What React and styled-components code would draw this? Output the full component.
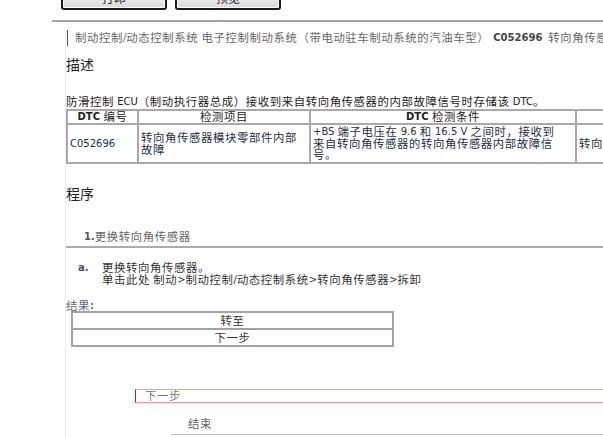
import React from "react";
import styled, { createGlobalStyle } from "styled-components";

const GlobalStyle = createGlobalStyle`
  html, body {
    margin: 0;
    padding: 0;
    background: #fff;
    overflow: hidden;
  }
  body {
    font-family: "DejaVu Sans", "Noto Sans CJK SC", sans-serif;
    font-size: 10px;
    color: #333;
  }
`;

// CJK runs are drawn a little larger than the Latin text, as in the manual.
// line-height 0 keeps them from stretching the line box.
const Han = styled.span`
  font-family: "Noto Sans CJK SC", sans-serif;
  font-size: 11.4px;
  letter-spacing: 0.6px;
  font-weight: 400;
  line-height: 0;
  vertical-align: -1px;
`;

const HAN_RUN = /([\u2E80-\u9FFF\u3000-\u303F\uFF00-\uFFEF]+)/;

function Mixed({ text }) {
  return text.split(HAN_RUN).map((part, i) =>
    i % 2 ? <Han key={i}>{part}</Han> : part
  );
}

const Page = styled.div`
  width: 603px;
  height: 437px;
  overflow: hidden;
`;

const Toolbar = styled.div`
  display: flex;
  gap: 8px;
  margin-top: -14px;
  padding-left: 61px;
`;

const ToolButton = styled.button`
  width: 106px;
  height: 24px;
  box-sizing: border-box;
  border: 2px solid #1a1a1a;
  border-radius: 3px;
  background: linear-gradient(#fbfbfb, #dadada);
  box-shadow: inset 0 0 0 1px #fff;
  font-family: "Noto Sans CJK SC", sans-serif;
  font-size: 12px;
  line-height: 18px;
  color: #222;
  padding: 0;
`;

const TopRule = styled.div`
  margin: 10px 0 0 52px;
  height: 2px;
  background: #a6a6a6;
`;

const Content = styled.div`
  margin-left: 65px;
  border-left: 1px solid #ececec;
  min-height: 420px;
  width: 700px;
`;

const Crumb = styled.div`
  margin: 8px 0 0 1px;
  border-left: 1px solid #555;
  padding-left: 7px;
  height: 16px;
  line-height: 16px;
  color: #666;
  white-space: nowrap;
`;

const Code = styled.b`
  color: #444;
  margin: 0 6px 0 4px;
`;

const Heading = styled.h2`
  margin: ${p => p.$top}px 0 0;
  font-family: "Noto Sans CJK SC", sans-serif;
  font-size: 14px;
  font-weight: 400;
  line-height: 16px;
  color: #222;
`;

const Para = styled.p`
  margin: 23px 0 0;
  line-height: 13px;
  color: #222;
  white-space: nowrap;
`;

const DtcTable = styled.table`
  margin-top: 1px;
  border-collapse: collapse;
  table-layout: fixed;
  width: 655px;
  color: #26303f;
`;

const HeadCell = styled.th`
  width: ${p => p.$w}px;
  border: 2px solid #a9a9a9;
  padding: 0;
  height: 10px;
  line-height: 12px;
  font-weight: 700;
  color: #222;
  text-align: center;
`;

const Cell = styled.td`
  border: 2px solid #a9a9a9;
  padding: 1px ${p => p.$pr || 8}px 1px 2px;
  height: 35px;
  line-height: 11.5px;
  vertical-align: middle;
`;

const StepTitle = styled.div`
  margin-top: 30px;
  padding: 0 0 3px 18px;
  border-bottom: 2px solid #ababab;
  line-height: 12px;
  color: #666;
`;

const StepNo = styled.b`
  color: #555;
`;

const SubStep = styled.div`
  display: grid;
  grid-template-columns: 24px 1fr;
  margin-top: 14px;
  padding-left: 12px;
  line-height: 12px;
  color: #333;
`;

const SubLabel = styled.b`
  color: #3c5272;
`;

const ResultLabel = styled.div`
  margin-top: 14px;
  line-height: 12px;
  color: #5a6b7c;
  font-weight: 700;
`;

const ResultTable = styled.table`
  margin: -1px 0 0 5px;
  width: 323px;
  border-collapse: collapse;
`;

const ResultCell = styled.td`
  border: 2px solid #a3a3a3;
  height: 15px;
  padding: 0;
  line-height: 15px;
  text-align: center;
  color: #333;
`;

const NextBox = styled.div`
  margin: 42px 0 0 69px;
  border: 1px solid #f59a9a;
  border-left-color: #d01818;
  padding-left: 9px;
  line-height: 12px;
  color: #777;
`;

const EndRow = styled.div`
  margin: 15px 0 0 105px;
  padding: 0 0 4px 17px;
  border-bottom: 1px solid #bdbdbd;
  line-height: 12px;
  color: #666;
`;

export default function App() {
  return (
    <Page>
      <GlobalStyle />
      <Toolbar>
        <ToolButton>打印</ToolButton>
        <ToolButton>预览</ToolButton>
      </Toolbar>
      <TopRule />
      <Content>
        <Crumb>
          <Mixed text="制动控制/动态控制系统 电子控制制动系统（带电动驻车制动系统的汽油车型）" />
          <Code>C052696</Code>
          <Mixed text="转向角传感器模块零部件内部故障" />
        </Crumb>

        <Heading $top={10}>描述</Heading>
        <Para>
          <Mixed text="防滑控制 ECU（制动执行器总成）接收到来自转向角传感器的内部故障信号时存储该 DTC。" />
        </Para>

        <DtcTable>
          <thead>
            <tr>
              <HeadCell $w={69}>DTC <Han>编号</Han></HeadCell>
              <HeadCell $w={170}><Han>检测项目</Han></HeadCell>
              <HeadCell $w={264}>DTC <Han>检测条件</Han></HeadCell>
              <HeadCell $w={152}><Han>故障部位</Han></HeadCell>
            </tr>
          </thead>
          <tbody>
            <tr>
              <Cell>C052696</Cell>
              <Cell $pr={6}><Mixed text="转向角传感器模块零部件内部故障" /></Cell>
              <Cell $pr={14}><Mixed text="+BS 端子电压在 9.6 和 16.5 V 之间时，接收到来自转向角传感器的转向角传感器内部故障信号。" /></Cell>
              <Cell><Mixed text="转向角传感器" /></Cell>
            </tr>
          </tbody>
        </DtcTable>

        <Heading $top={21}>程序</Heading>

        <StepTitle>
          <StepNo>1.</StepNo><Mixed text="更换转向角传感器" />
        </StepTitle>

        <SubStep>
          <SubLabel>a.</SubLabel>
          <div>
            <Mixed text="更换转向角传感器。" />
            <br />
            <Mixed text="单击此处 制动>制动控制/动态控制系统>转向角传感器>拆卸" />
          </div>
        </SubStep>

        <ResultLabel><Han>结果</Han>:</ResultLabel>
        <ResultTable>
          <tbody>
            <tr><ResultCell><Han>转至</Han></ResultCell></tr>
            <tr><ResultCell><Han>下一步</Han></ResultCell></tr>
          </tbody>
        </ResultTable>

        <NextBox><Han>下一步</Han></NextBox>

        <EndRow><Han>结束</Han></EndRow>
      </Content>
    </Page>
  );
}
